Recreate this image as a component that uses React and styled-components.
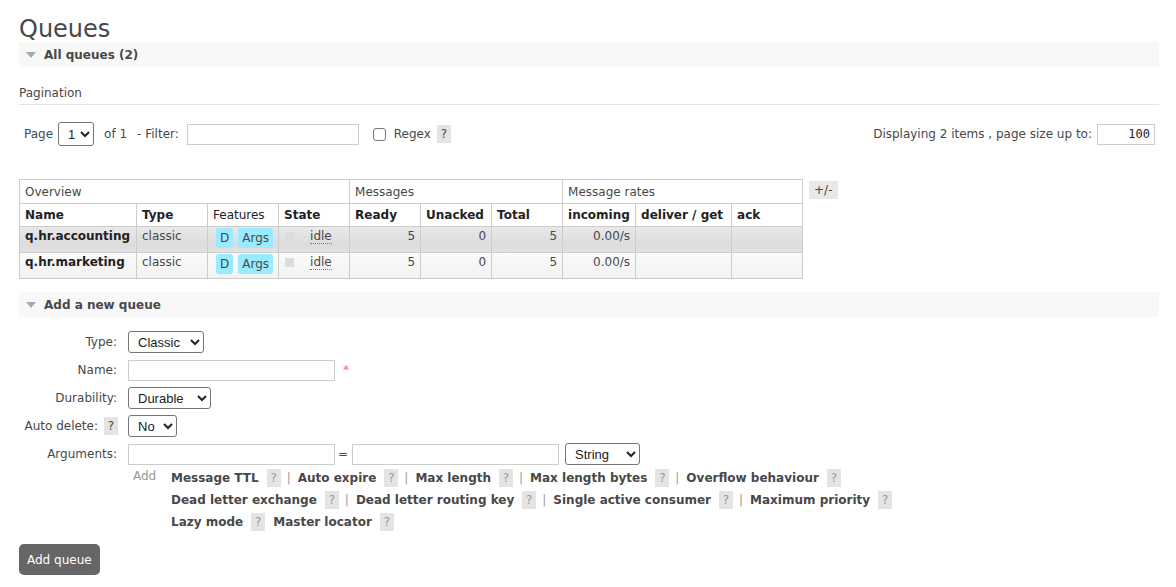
import React from 'react';
import styled, { createGlobalStyle } from 'styled-components';

const GlobalStyle = createGlobalStyle`
  html, body { margin: 0; padding: 0; background: #fff; }
  body {
    font-family: "DejaVu Sans", Verdana, sans-serif;
    font-size: 12px;
    color: #484848;
  }
`;

const Page = styled.div`
  padding: 14px 17px 12px 19px;
`;

const Title = styled.h1`
  margin: 0 0 -2px 0;
  font-size: 24px;
  font-weight: normal;
  line-height: 30px;
  color: #484848;
`;

const SectionBar = styled.div`
  display: flex;
  align-items: center;
  gap: 7px;
  height: 25px;
  padding-left: 7px;
  background: #f8f8f8;
  font-weight: bold;
  font-size: 12px;
  color: #484848;
  margin-top: ${p => p.$mt || 0}px;
`;

const Triangle = styled.span`
  width: 0;
  height: 0;
  border-left: 5px solid transparent;
  border-right: 5px solid transparent;
  border-top: 6px solid #aaa;
  margin-right: 1px;
`;

const SubHeading = styled.div`
  margin-top: 19px;
  padding-bottom: 3px;
  border-bottom: 1px solid #e4e4e4;
  line-height: 15px;
`;

const PagingRow = styled.div`
  display: flex;
  align-items: center;
  justify-content: space-between;
  margin-top: 16px;
  padding: 0 4px 0 5px;
  height: 26px;
`;

const Group = styled.div`
  display: flex;
  align-items: center;
`;

const Label = styled.span`
  margin-right: ${p => p.$mr || 0}px;
  margin-left: ${p => p.$ml || 0}px;
`;

const Select = styled.select`
  font-family: "Liberation Sans", Arial, sans-serif;
  font-size: 13px;
  height: ${p => p.$h || 22}px;
  width: ${p => p.$w}px;
  border: 1px solid #767676;
  border-radius: 3px;
  background: #fff;
  color: #222;
  padding: 0 2px 0 5px;
`;

const TextInput = styled.input`
  box-sizing: border-box;
  width: ${p => p.$w}px;
  height: 21px;
  border: 1px solid #ccc;
  padding: 1px 4px;
  font-family: ${p => (p.$mono ? '"DejaVu Sans Mono", monospace' : 'inherit')};
  font-size: 12px;
  text-align: ${p => (p.$right ? 'right' : 'left')};
  color: #222;
  outline: none;
`;

const Check = styled.span`
  display: inline-block;
  box-sizing: border-box;
  width: 13px;
  height: 13px;
  border: 1px solid #777;
  border-radius: 3px;
  background: #fff;
  margin: 0 8px 0 14px;
`;

const Help = styled.span`
  display: inline-flex;
  align-items: center;
  justify-content: center;
  width: 14px;
  height: 18px;
  background: #e4e4e4;
  color: ${p => (p.$light ? '#999' : '#484848')};
  font-size: 12px;
  font-weight: normal;
  margin-left: ${p => p.$ml ?? 6}px;
  margin-right: ${p => p.$mr ?? 0}px;
`;

const TableWrap = styled.div`
  display: flex;
  align-items: flex-start;
  gap: 6px;
  margin-top: 32px;
`;

const Table = styled.table`
  border-collapse: collapse;
  border: 1px solid #ccc;
  font-size: 12px;
`;

const Th = styled.th`
  border: 1px solid #ccc;
  text-align: left;
  padding: 0 5px;
  height: ${p => p.$h || 22}px;
  font-weight: ${p => (p.$plain ? 'normal' : 'bold')};
  width: ${p => (p.$w ? `${p.$w - 11}px` : 'auto')};
  white-space: nowrap;
  color: #222;
  background: #fff;
  ${p => p.$group && 'color: #484848;'}
`;

const Tr = styled.tr`
  background: ${p =>
    p.$alt
      ? 'linear-gradient(#fafafa, #f2f2f2)'
      : 'linear-gradient(#e8e8e8, #dcdcdc 70%, #e4e4e4)'};
`;

const Td = styled.td`
  border-left: 1px solid #ccc;
  border-right: 1px solid #ccc;
  border-top: 1px solid #ccc;
  height: 26px;
  padding: 2px 5px 0 5px;
  vertical-align: top;
  box-sizing: border-box;
  text-align: ${p => (p.$right ? 'right' : 'left')};
  font-weight: ${p => (p.$bold ? 'bold' : 'normal')};
  color: ${p => (p.$bold ? '#222' : '#484848')};
  white-space: nowrap;
`;

const FeatureCell = styled(Td)`
  padding-top: 1px;
`;

const Badge = styled.span`
  display: inline-block;
  background: #99ebff;
  border-radius: 3px;
  padding: 0 4px;
  line-height: 20px;
  margin-left: ${p => p.$ml ?? 0}px;
  margin-right: ${p => p.$mr ?? 0}px;
  color: #484848;
`;

const StateBox = styled.span`
  display: inline-block;
  width: 9px;
  height: 9px;
  background: #ddd;
  vertical-align: top;
  margin: 3px 16px 0 1px;
`;

const Idle = styled.span`
  border-bottom: 1px dotted #777;
`;

const ToggleBtn = styled.span`
  display: inline-block;
  background: #e8e8e8;
  padding: 1px 5px;
  margin-top: 2px;
  line-height: 16px;
  color: #484848;
`;

const Form = styled.div`
  display: grid;
  grid-template-columns: 98px auto;
  column-gap: 11px;
  row-gap: 6px;
  margin-top: 14px;
  align-items: center;
`;

const FormLabel = styled.div`
  display: flex;
  justify-content: flex-end;
  align-items: center;
  white-space: nowrap;
  height: 22px;
`;

const FormField = styled.div`
  display: flex;
  align-items: center;
`;

const Required = styled.span`
  color: #f66;
  margin-left: 8px;
  font-size: 12px;
`;

const Equals = styled.span`
  margin: 0 4px 0 3px;
`;

const TypeSelect = styled(Select)`
  margin-left: 6px;
`;

const AddRow = styled.div`
  display: flex;
  margin: 3px 0 0 109px;
`;

const AddLink = styled.span`
  color: #999;
  width: 38px;
  padding-left: 5px;
  line-height: 16px;
`;

const Links = styled.div`
  display: flex;
  flex-direction: column;
  gap: 4px;
  padding-top: 1px;
`;

const LinkLine = styled.div`
  display: flex;
  align-items: center;
  height: 18px;
`;

const ArgLink = styled.span`
  font-weight: bold;
  color: #484848;
`;

const Sep = styled.span`
  color: #999;
  margin: 0 7px 0 6px;
`;

const Spacer = styled.span`
  width: 8px;
`;

const Button = styled.button`
  margin-top: 13px;
  background: #666;
  color: #fff;
  border: none;
  border-radius: 5px;
  font-family: inherit;
  font-size: 12px;
  height: 31px;
  padding: 0 8px;
`;

const linkRows = [
  ['Message TTL', 'Auto expire', 'Max length', 'Max length bytes', 'Overflow behaviour'],
  ['Dead letter exchange', 'Dead letter routing key', 'Single active consumer', 'Maximum priority'],
  ['Lazy mode', 'Master locator'],
];

const queues = [
  { name: 'q.hr.accounting', alt: false },
  { name: 'q.hr.marketing', alt: true },
];

export default function App() {
  return (
    <Page>
      <GlobalStyle />
      <Title>Queues</Title>
      <SectionBar>
        <Triangle />
        All queues (2)
      </SectionBar>
      <SubHeading>Pagination</SubHeading>
      <PagingRow>
        <Group>
          <Label $mr={5}>Page</Label>
          <Select $w={36} $h={24} defaultValue="1">
            <option>1</option>
          </Select>
          <Label $ml={10} $mr={10}>of 1</Label>
          <Label $mr={8}>- Filter:</Label>
          <TextInput $w={172} />
          <Check />
          <Label>Regex</Label>
          <Help>?</Help>
        </Group>
        <Group>
          <Label $mr={5}>Displaying 2 items , page size up to:</Label>
          <TextInput $w={58} $mono $right defaultValue="100" />
        </Group>
      </PagingRow>

      <TableWrap>
        <Table>
          <thead>
            <tr>
              <Th $plain $group $h={23} colSpan={4}>Overview</Th>
              <Th $plain $group $h={23} colSpan={3}>Messages</Th>
              <Th $plain $group $h={23} colSpan={3}>Message rates</Th>
            </tr>
            <tr>
              <Th $w={117}>Name</Th>
              <Th $w={71}>Type</Th>
              <Th $w={71} $plain>Features</Th>
              <Th $w={71}>State</Th>
              <Th $w={71}>Ready</Th>
              <Th $w={71}>Unacked</Th>
              <Th $w={71}>Total</Th>
              <Th $w={73}>incoming</Th>
              <Th $w={96}>deliver / get</Th>
              <Th $w={71}>ack</Th>
            </tr>
          </thead>
          <tbody>
            {queues.map(q => (
              <Tr key={q.name} $alt={q.alt}>
                <Td $bold>{q.name}</Td>
                <Td>classic</Td>
                <FeatureCell>
                  <Badge $ml={3} $mr={5}>D</Badge>
                  <Badge>Args</Badge>
                </FeatureCell>
                <Td>
                  <StateBox />
                  <Idle>idle</Idle>
                </Td>
                <Td $right>5</Td>
                <Td $right>0</Td>
                <Td $right>5</Td>
                <Td $right>0.00/s</Td>
                <Td />
                <Td />
              </Tr>
            ))}
          </tbody>
        </Table>
        <ToggleBtn>+/-</ToggleBtn>
      </TableWrap>

      <SectionBar $mt={13}>
        <Triangle />
        Add a new queue
      </SectionBar>

      <Form>
        <FormLabel>Type:</FormLabel>
        <FormField>
          <Select $w={76} defaultValue="Classic">
            <option>Classic</option>
            <option>Quorum</option>
          </Select>
        </FormField>

        <FormLabel>Name:</FormLabel>
        <FormField>
          <TextInput $w={207} />
          <Required>*</Required>
        </FormField>

        <FormLabel>Durability:</FormLabel>
        <FormField>
          <Select $w={83} defaultValue="Durable">
            <option>Durable</option>
            <option>Transient</option>
          </Select>
        </FormField>

        <FormLabel>
          Auto delete:
          <Help $ml={6} $mr={-1}>?</Help>
        </FormLabel>
        <FormField>
          <Select $w={49} defaultValue="No">
            <option>No</option>
            <option>Yes</option>
          </Select>
        </FormField>

        <FormLabel>Arguments:</FormLabel>
        <FormField>
          <TextInput $w={207} />
          <Equals>=</Equals>
          <TextInput $w={207} />
          <TypeSelect $w={75} defaultValue="String">
            <option>String</option>
            <option>Number</option>
            <option>Boolean</option>
            <option>List</option>
          </TypeSelect>
        </FormField>
      </Form>

      <AddRow>
        <AddLink>Add</AddLink>
        <Links>
          {linkRows.map((row, ri) => (
            <LinkLine key={ri}>
              {row.map((item, i) => (
                <React.Fragment key={item}>
                  <ArgLink>{item}</ArgLink>
                  <Help $light $ml={8}>?</Help>
                  {ri < 2 && i < row.length - 1 && <Sep>|</Sep>}
                  {ri === 2 && i < row.length - 1 && <Spacer />}
                </React.Fragment>
              ))}
            </LinkLine>
          ))}
        </Links>
      </AddRow>

      <Button>Add queue</Button>
    </Page>
  );
}
